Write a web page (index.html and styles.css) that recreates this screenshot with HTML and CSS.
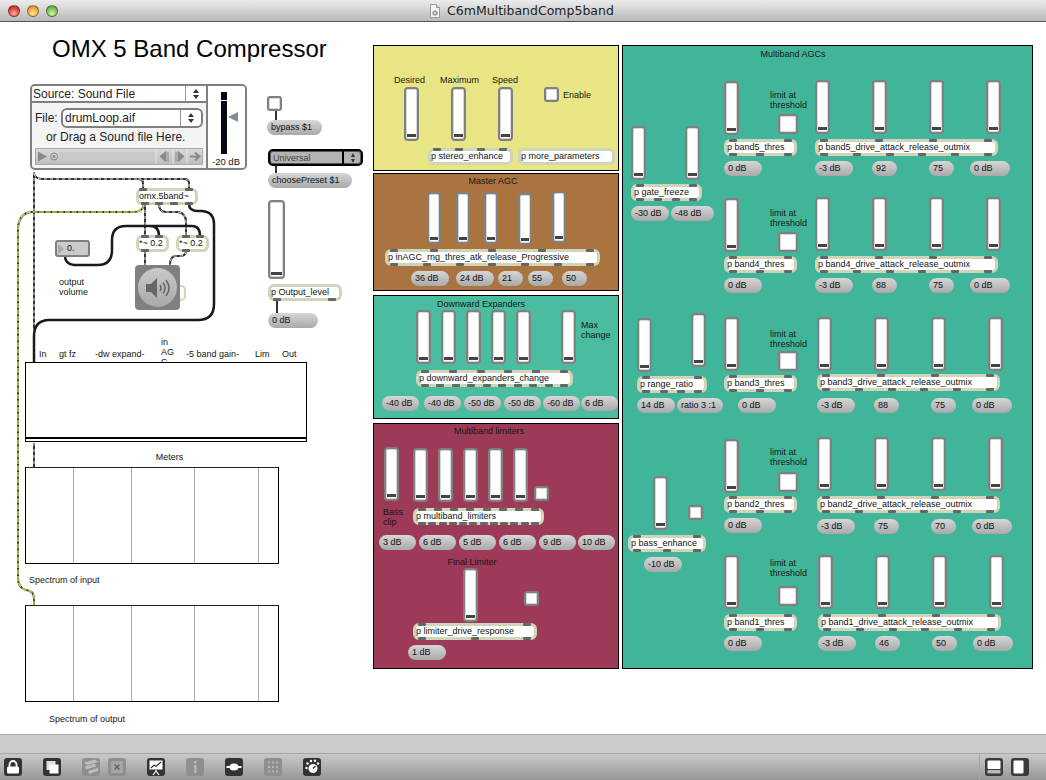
FILE: index.html
```html
<!DOCTYPE html>
<html>
<head>
	<title>C6mMultibandComp5band</title>
	<link rel="stylesheet" href="styles.css">
</head>
<body>
	<div class="window">
		<header class="titlebar">
			<div class="lights">
				<span class="light red"></span>
				<span class="light amber"></span>
				<span class="light green"></span>
			</div>
			<div class="doc-title">
				<svg class="doc-icon" width="12" height="14" viewBox="0 0 12 14">
					<path d="M1.5 .5h6l3 3v10h-9z" fill="#f4f4f4" stroke="#999"/>
					<path d="M7.5 .5v3h3" fill="#ddd" stroke="#999"/>
					<circle cx="6" cy="9" r="2.6" fill="#8a93a6"/>
					<path d="M6 6.400a2.600 2.600 0 0 1 2.600 2.600H6z" fill="#d98b3a"/>
					<circle cx="6" cy="9" r=".9" fill="#fff"/>
				</svg>
				C6mMultibandComp5band
			</div>
		</header>

		<main class="canvas" id="canvas">
			<svg class="wires" width="1046" height="712" viewBox="0 22 1046 712">
				<path class="wire-base" d="M34 172V330M34 443V467M34 174Q36 179 42 179H138Q143 179 143 183V188M138 179H184Q189 179 189 183V188"/>
				<path class="wire-dash" d="M34 172V330M34 443V467M34 174Q36 179 42 179H138Q143 179 143 183V188M138 179H184Q189 179 189 183V188"/>
				<path class="wire-base" d="M145 204V236M145 251V266M159 204Q159 212 166 212H178Q186 213 186 222V236M186 251Q186 256 180 256H175Q170 257 170 265"/>
				<path class="wire-dash" d="M145 204V236M145 251V266M159 204Q159 212 166 212H178Q186 213 186 222V236M186 251Q186 256 180 256H175Q170 257 170 265"/>
				<path class="wire-base" d="M144 204Q143 212 134 212H32Q18 213 18 230V578Q18 588 26 590Q34 591 34 598V606"/>
				<path class="wire-green" d="M144 204Q143 212 134 212H32Q18 213 18 230V578Q18 588 26 590Q34 591 34 598V606"/>
				<path class="wire-thick" d="M65 256Q65 264 74 265H98Q112 265 112 250V240Q112 226 126 226H150Q159 226 159 236M150 226H192Q200 226 200 236"/>
				<path class="wire-thick" d="M189 204Q189 211 198 211H202Q214 212 214 224V304Q214 320 198 320H48Q34 321 34 336V363"/>
				<path class="wire-thin" d="M276 111V121M276 165V174M277 300V314"/>
			</svg>

			<h1 class="page-title">OMX 5 Band Compressor</h1>

			<section class="player">
				<div class="player-main">
					<div class="source-row">
						<span class="source-label">Source: Sound File</span>
						<span class="stepper"><i class="up"></i><i class="down"></i></span>
					</div>
					<div class="file-row">
						<span class="file-label">File:</span>
						<div class="file-menu">
							<span class="file-name">drumLoop.aif</span>
							<span class="stepper"><i class="up"></i><i class="down"></i></span>
						</div>
					</div>
					<div class="drag-hint">or Drag a Sound file Here.</div>
					<div class="transport">
						<svg width="169" height="17" viewBox="0 0 169 17">
							<path d="M3 3.5l9 5-9 5z" fill="#8a8a8a"/>
							<circle cx="19" cy="8.5" r="3.5" fill="none" stroke="#8a8a8a"/>
							<circle cx="19" cy="8.5" r="1.5" fill="#8a8a8a"/>
							<rect x="24" y="4" width="96" height="9" rx="2" fill="#c8c8c8"/>
							<path d="M125 8.5l6-5v10zM133 3.5v10" fill="#8a8a8a" stroke="#8a8a8a"/>
							<path d="M141 3.5v10M143 3.5l6 5-6 5z" fill="#8a8a8a" stroke="#8a8a8a"/>
							<path d="M155 8.5h9M160 4.5l4.500 4-4.500 4" fill="none" stroke="#8a8a8a" stroke-width="2"/>
							<path d="M121 0v17M138 0v17M152 0v17" stroke="#e4e4e4"/>
						</svg>
					</div>
				</div>
				<div class="player-gain">
					<div class="gain-track">
						<span class="gain-bar"><i class="gain-tick"></i></span>
						<svg class="gain-pointer" width="10" height="10" viewBox="0 0 10 10"><path d="M0 5L10 0V10z"/></svg>
					</div>
					<div class="gain-label">-20 dB</div>
				</div>
			</section>

			<div class="ezdac">
				<div class="ezdac-face">
					<svg width="26" height="22" viewBox="0 0 26 22">
						<path d="M1 7h5l6-6v20l-6-6H1z" fill="#666"/>
						<path d="M15 8q2 3 0 6M18 5.500q4 5.500 0 11M21 3q6 8 0 16" fill="none" stroke="#666" stroke-width="1.600"/>
					</svg>
				</div>
			</div>
			<div class="ezdac-tail"></div>

			<div class="meter-box">
				<div class="meter-rule"></div>
			</div>
		</main>

		<div class="status-strip"></div>

		<footer class="toolbar">
			<div class="tools-left">
				<span class="tool">
					<svg width="18" height="18" viewBox="0 0 18 18"><path d="M5.500 9V6.500a3.500 3.500 0 0 1 7 0V9" fill="none" stroke="#fff" stroke-width="1.800"/><rect x="3" y="8.500" width="12" height="7" rx="1.500" fill="#fff"/></svg>
				</span>
				<span class="tool">
					<svg width="18" height="18" viewBox="0 0 18 18"><rect x="3.500" y="3" width="9" height="9" fill="#d8e4e0"/><rect x="6.500" y="6.500" width="9" height="9" fill="#fff"/></svg>
				</span>
				<span class="tool off gap-s">
					<svg width="18" height="18" viewBox="0 0 18 18"><path d="M2 4.500l11-3 3 2.500-11 3zM3 8.500l10-3 1 3-10 3zM6 13l10-3v3l-9 3z" fill="#bdbdbd"/></svg>
				</span>
				<span class="tool off">
					<svg width="18" height="18" viewBox="0 0 18 18"><rect x="3" y="3" width="12" height="12" fill="#a6a6a6"/><path d="M6.500 6.500l5 5M11.500 6.500l-5 5" stroke="#666" stroke-width="1.600"/></svg>
				</span>
				<span class="tool gap-l">
					<svg width="18" height="18" viewBox="0 0 18 18"><rect x="2.500" y="2.500" width="13" height="9" fill="#fff"/><path d="M4 10l3-3 2 1.500L14 4" fill="none" stroke="#333" stroke-width="1.200"/><path d="M9 12v2M9 13l-3 4M9 13l3 4" stroke="#fff" stroke-width="1.200"/></svg>
				</span>
				<span class="tool off gap-l">
					<svg width="18" height="18" viewBox="0 0 18 18"><rect x="8" y="3" width="2.500" height="2.500" fill="#b6b6b6"/><rect x="8" y="7" width="2.500" height="8" fill="#b6b6b6"/></svg>
				</span>
				<span class="tool gap-l">
					<svg width="18" height="18" viewBox="0 0 18 18"><path d="M1.500 9h15" stroke="#fff" stroke-width="2"/><ellipse cx="9" cy="9" rx="4.500" ry="3.500" fill="#fff"/></svg>
				</span>
				<span class="tool off gap-l">
					<svg width="18" height="18" viewBox="0 0 18 18"><path d="M4 4.500h10M4 9h10M4 13.500h10" stroke="#b4b4b4" stroke-width="2" stroke-dasharray="2 2"/></svg>
				</span>
				<span class="tool gap-l">
					<svg width="18" height="18" viewBox="0 0 18 18"><circle cx="10" cy="10.500" r="4.500" fill="#fff"/><path d="M10 10.500l2.500-2.500" stroke="#333" stroke-width="1.300"/><g fill="#fff"><circle cx="3.500" cy="10" r="1.200"/><circle cx="4.500" cy="5.500" r="1.200"/><circle cx="8" cy="3" r="1.200"/><circle cx="12" cy="2.800" r="1.200"/><circle cx="15" cy="5.500" r="1.200"/></g></svg>
				</span>
			</div>
			<div class="tools-right">
				<span class="tool pane">
					<svg width="18" height="18" viewBox="0 0 18 18"><rect x="2.500" y="2.500" width="13" height="8.500" rx="1" fill="#fff"/><rect x="2.500" y="12" width="13" height="3.500" fill="#b8b8b8"/></svg>
				</span>
				<span class="tool pane">
					<svg width="18" height="18" viewBox="0 0 18 18"><rect x="2.500" y="2.500" width="10" height="13" rx="1" fill="#fff"/></svg>
				</span>
			</div>
		</footer>
	</div>
	<script src="app.js"></script>
</body>
</html>
```

FILE: styles.css
```css
* {
	box-sizing: border-box;
}
html, body {
	margin: 0;
	padding: 0;
	height: 100%;
}
body {
	font-family: "Liberation Sans", Arial, sans-serif;
	font-size: 9px;
	color: #111;
	overflow: hidden;
}
.window {
	display: flex;
	flex-direction: column;
	width: 1046px;
	height: 780px;
}

/* title bar */
.titlebar {
	position: relative;
	display: flex;
	align-items: center;
	justify-content: center;
	height: 22px;
	flex-shrink: 0;
	background: linear-gradient(#ececec, #b9b9b9);
	border-bottom: 1px solid #555;
}
.lights {
	position: absolute;
	left: 8px;
	top: 5px;
	display: flex;
	gap: 7px;
}
.light {
	width: 12px;
	height: 12px;
	border-radius: 50%;
	border: 1px solid rgba(0,0,0,0.35);
}
.red {
	background: radial-gradient(circle at 50% 75%, #ffb0a8, #e0413a 60%, #a82a25);
}
.amber {
	background: radial-gradient(circle at 50% 75%, #ffe6a0, #eda63a 60%, #b37a20);
}
.green {
	background: radial-gradient(circle at 50% 75%, #d6f5b0, #75bd4f 60%, #4d8c30);
}
.doc-title {
	display: flex;
	align-items: center;
	gap: 6px;
	margin-left: -3px;
	font-family: "DejaVu Sans", sans-serif;
	font-size: 12.5px;
	color: #222;
}
.doc-icon {
	margin-top: 1px;
}

/* patcher canvas, everything in it sits on free coordinates */
.canvas {
	position: relative;
	flex: 1;
	background-color: #fff;
	overflow: hidden;
}
.wires {
	position: absolute;
	left: 0;
	top: 0;
	z-index: 2;
}
.wires path {
	fill: none;
}
.wire-base {
	stroke: #333;
	stroke-width: 2;
}
.wire-dash {
	stroke: #e0e0e0;
	stroke-width: 1;
	stroke-dasharray: 3 3;
}
.wire-green {
	stroke: #b6d94c;
	stroke-width: 1.500;
	stroke-dasharray: 5 1.500;
}
.wire-thick {
	stroke: #1a1a1a;
	stroke-width: 2.500;
}
.wire-thin {
	stroke: #333;
	stroke-width: 2;
}
.page-title {
	position: absolute;
	left: 52px;
	top: 13px;
	margin: 0;
	font-size: 24px;
	font-weight: normal;
	line-height: 28px;
	color: #000;
	white-space: nowrap;
}

/* sound file player */
.player {
	position: absolute;
	left: 30px;
	top: 62px;
	z-index: 3;
	display: flex;
	width: 217px;
	height: 86px;
	background-color: #f4f4f4;
	border: 2px solid #808080;
	border-radius: 5px;
	overflow: hidden;
}
.player-main {
	width: 176px;
	border-right: 2px solid #808080;
}
.source-row {
	display: flex;
	align-items: center;
	justify-content: space-between;
	height: 17px;
	background-color: #fff;
	border-bottom: 2px solid #808080;
}
.source-label {
	padding-left: 1px;
	font-size: 12px;
	color: #222;
}
.stepper {
	display: flex;
	flex-direction: column;
	align-items: center;
	justify-content: center;
	gap: 2px;
	width: 21px;
	height: 100%;
	border-left: 1px solid #999;
}
.stepper i {
	width: 0;
	height: 0;
	border-left: 3px solid transparent;
	border-right: 3px solid transparent;
}
.stepper .up {
	border-bottom: 4px solid #333;
}
.stepper .down {
	border-top: 4px solid #333;
}
.file-row {
	display: flex;
	align-items: center;
	padding: 5px 0 0 3px;
}
.file-label {
	width: 26px;
	font-size: 12px;
	color: #222;
}
.file-menu {
	display: flex;
	align-items: center;
	justify-content: space-between;
	width: 142px;
	height: 20px;
	background-color: #fff;
	border: 2px solid #808080;
	border-radius: 6px;
}
.file-name {
	padding-left: 2px;
	font-size: 12px;
	color: #222;
}
.drag-hint {
	padding: 2px 0 0 14px;
	font-size: 12px;
	line-height: 15px;
	color: #222;
}
.transport {
	display: flex;
	height: 17px;
	margin: 3px 0 0 3px;
	width: 168px;
	background: linear-gradient(#d8d8d8, #bdbdbd);
	border: 1px solid #aaa;
	overflow: hidden;
}
.transport svg {
	flex-shrink: 0;
	margin: -1px;
}
.player-gain {
	flex: 1;
	background-color: #fff;
}
.gain-track {
	position: relative;
	height: 62px;
	margin-top: 6px;
}
.gain-bar {
	position: absolute;
	left: 13px;
	top: 0;
	width: 6px;
	height: 62px;
	background-color: #040814;
}
.gain-tick {
	display: block;
	width: 6px;
	height: 1px;
	margin-top: 8px;
	background-color: #fff;
}
.gain-pointer {
	position: absolute;
	left: 20px;
	top: 20px;
}
.gain-pointer path {
	fill: #7f8c99;
}
.gain-label {
	margin-top: 1px;
	padding-left: 4px;
	font-size: 9.500px;
	line-height: 14px;
	color: #111;
	white-space: nowrap;
}

/* dac */
.ezdac {
	position: absolute;
	left: 135px;
	top: 243px;
	z-index: 4;
	display: flex;
	align-items: center;
	justify-content: center;
	width: 45px;
	height: 45px;
	background-color: #808080;
	border-radius: 4px;
}
.ezdac-face {
	display: flex;
	align-items: center;
	justify-content: center;
	width: 39px;
	height: 39px;
	background: linear-gradient(#c9c9cc, #a9a9ad);
	border-radius: 50%;
}
.ezdac-tail {
	position: absolute;
	left: 176px;
	top: 263px;
	z-index: 3;
	width: 10px;
	height: 16px;
	background-color: #fff;
	border: 2px solid #d0d6b4;
	border-radius: 5px;
}

/* meter boxes */
.meter-box {
	position: absolute;
	left: 25px;
	top: 340px;
	z-index: 3;
	width: 282px;
	height: 80px;
	background-color: #fff;
	border: 1px solid #000;
}
.meter-rule {
	position: absolute;
	left: 0;
	right: 0;
	bottom: 2px;
	height: 2px;
	background-color: #000;
}
.scope {
	position: absolute;
	z-index: 3;
	width: 254px;
	height: 97px;
	background-color: #fff;
	border: 1px solid #000;
	border-top-color: #222;
}
.scope-line {
	position: absolute;
	top: 0;
	bottom: 0;
	width: 1px;
	background-color: #aaa;
}

/* coloured panels */
.panel {
	position: absolute;
	border: 1px solid #000;
}
.panel-yellow {
	background-color: #e8e584;
}
.panel-brown {
	background-color: #a9743f;
}
.panel-green {
	background-color: #4abda0;
}
.panel-crimson {
	background-color: #9c3a57;
}
.panel-teal {
	background-color: #41b59a;
}

/* patcher objects */
.node {
	position: absolute;
	z-index: 3;
}
.node.under {
	z-index: 1;
}
.label {
	line-height: 10px;
	white-space: pre;
	color: #161616;
}
.slider {
	background-color: #fff;
	border: 2px solid #808080;
	border-radius: 4px;
	box-shadow: inset 0 0 0 1px #d8d8d8;
}
.slider::after {
	content: "";
	position: absolute;
	left: 1px;
	right: 1px;
	bottom: 2px;
	height: 3px;
	background-color: #444;
}
.toggle {
	background-color: #fff;
	border: 2px solid #808080;
	border-radius: 3px;
	box-shadow: inset 0 0 0 1px #d8d8d8;
}
.box {
	display: flex;
	align-items: center;
	padding-left: 1px;
	background-color: #fff;
	border: 3px solid #d0d4b8;
	border-radius: 6px;
	line-height: 11px;
	white-space: nowrap;
	color: #111;
}
.box-text {
	margin-left: -1px;
}
.tab {
	position: absolute;
	width: 8px;
	height: 3px;
	background-color: #666;
	border-radius: 1px;
}
.tab-top {
	top: -3px;
}
.tab-bottom {
	bottom: -3px;
}
.num {
	display: flex;
	align-items: center;
	padding-left: 4px;
	background: linear-gradient(#d6d6d6, #a9a9a9);
	border-radius: 8px;
	line-height: 11px;
	white-space: nowrap;
	color: #111;
}
.num-square {
	padding-left: 10px;
	background: #cbcbcb;
	border: 2px solid #808080;
	border-radius: 3px;
}
.num-square::before {
	content: "";
	position: absolute;
	left: 1px;
	top: 2px;
	border-left: 6px solid #aaa;
	border-top: 5px solid transparent;
	border-bottom: 5px solid transparent;
}
.menu-dark {
	display: flex;
	align-items: center;
	justify-content: space-between;
	padding-left: 3px;
	background-color: #b3b3b3;
	border: 2px solid #000;
	border-radius: 5px;
	box-shadow: inset 0 0 0 1px #555;
	color: #444;
}
.menu-dark .stepper {
	width: 19px;
	border-left: 2px solid #000;
}
.menu-dark .stepper i {
	border-left-width: 2.500px;
	border-right-width: 2.500px;
}

/* bottom of the window */
.status-strip {
	height: 20px;
	flex-shrink: 0;
	background-color: #cbcbcb;
	border-top: 1px solid #a8a8a8;
	border-bottom: 1px solid #a8a8a8;
}
.toolbar {
	display: flex;
	align-items: flex-start;
	justify-content: space-between;
	height: 26px;
	padding: 4px 17px 0 4px;
	flex-shrink: 0;
	background: linear-gradient(#c9c9c9, #969696);
}
.tools-left {
	display: flex;
	gap: 21px;
}
.tools-right {
	display: flex;
	gap: 8px;
	padding-left: 5px;
	border-left: 1px solid #a4a4a4;
	margin-top: -4px;
	padding-top: 4px;
	height: 26px;
}
.tool {
	display: block;
	width: 18px;
	height: 18px;
	background-color: #333;
	border-radius: 3px;
}
.tool svg {
	display: block;
}
.tool.off {
	background-color: #8f8f8f;
}
.tools-left .gap-s + .tool {
	margin-left: -13px;
}
.pane {
	background-color: #3a3a3a;
}
```

FILE: app.js
```js
// patcher contents, all coordinates are window coordinates from the patch
var CANVAS_TOP = 22;
var canvas = document.getElementById("canvas");

function place(kind, x, y, w, h, text) {
	var el = document.createElement("div");
	el.className = "node " + kind;
	el.style.left = x + "px";
	el.style.top = (y - CANVAS_TOP) + "px";
	if (w) el.style.width = w + "px";
	if (h) el.style.height = h + "px";
	if (text) el.textContent = text;
	canvas.appendChild(el);
	return el;
}

function panel(color, x, y, w, h) {
	var el = document.createElement("div");
	el.className = "panel panel-" + color;
	el.style.left = x + "px";
	el.style.top = (y - CANVAS_TOP) + "px";
	el.style.width = w + "px";
	el.style.height = h + "px";
	canvas.appendChild(el);
}

function label(text, x, y) {
	place("label", x, y, 0, 0, text);
}

function centered(text, cx, y) {
	var el = place("label", cx, y, 0, 0, text);
	el.style.transform = "translateX(-50%)";
}

function slider(x, y, w, h) {
	place("slider", x, y, w || 15, h || 54);
}

function toggle(x, y, size) {
	place("toggle", x, y, size || 15, size || 15);
}

function num(text, x, y, w) {
	place("num", x, y, w, 15, text);
}

// tops and bottoms are tab centres in window coordinates
function box(text, x, y, w, tops, bottoms, h) {
	var el = place("box", x, y, w, h || 17);
	var span = document.createElement("span");
	span.className = "box-text";
	span.textContent = text;
	el.appendChild(span);
	addTabs(el, x, tops || [], "tab-top");
	addTabs(el, x, bottoms || [], "tab-bottom");
}

function addTabs(el, x, list, side) {
	list.forEach(function(cx) {
		var tab = document.createElement("span");
		tab.className = "tab " + side;
		tab.style.left = (cx - x - 7) + "px";
		el.appendChild(tab);
	});
}

function spread(a, b, n) {
	var out = [];
	for (var i = 0; i < n; i++) out.push(Math.round(a + (b - a) * i / (n - 1)));
	return out;
}

// left column
toggle(267, 96);
num("bypass $1", 267, 120, 55);
var menu = place("menu-dark", 268, 149, 95, 17);
menu.innerHTML = '<span>Universal</span><span class="stepper"><i class="up"></i><i class="down"></i></span>';
num("choosePreset $1", 268, 173, 84);
slider(268, 200, 17, 79);
box("p Output_level", 268, 284, 74, [], [277, 332]);
num("0 dB", 268, 313, 50);

box("omx.5band~", 136, 188, 62, [143, 189], [145, 159, 174, 189]);
box("*~ 0.2", 136, 235, 33, [145, 159], [145]);
box("*~ 0.2", 176, 235, 33, [186, 200], [186]);
place("num num-square", 55, 240, 35, 17, "0.");
label("output\nvolume", 59, 277);

label("In", 39, 349);
label("gt fz", 59, 349);
label("-dw expand-", 95, 349);
place("label under", 161, 337, 0, 0, "in\nAG\nC");
label("-5 band gain-", 186, 349);
label("Lim", 255, 349);
label("Out", 282, 349);

centered("Meters", 169.5, 452);
[467, 605].forEach(function(top) {
	var el = place("scope", 25, top, 254, 97);
	[47, 105, 168, 232].forEach(function(x) {
		var line = document.createElement("div");
		line.className = "scope-line";
		line.style.left = x + "px";
		el.appendChild(line);
	});
});
label("Spectrum of input", 29, 575);
label("Spectrum of output", 49, 714);

// panels
panel("yellow", 373, 45, 246, 126);
panel("brown", 373, 173, 246, 118);
panel("green", 373, 295, 246, 124);
panel("crimson", 373, 423, 246, 246);
panel("teal", 622, 45, 411, 624);

// stereo enhance
label("Desired", 394, 75);
label("Maximum", 440, 75);
label("Speed", 492, 75);
[404, 451, 498].forEach(function(x) { slider(x, 87); });
toggle(544, 87);
label("Enable", 563, 90);
box("p stereo_enhance", 428, 148, 85, [437, 459, 481, 503], []);
box("p more_parameters", 518, 148, 97);

// master agc
centered("Master AGC", 493, 176);
slider(427, 192, 14, 52);
slider(456, 192, 14, 52);
slider(484, 192, 14, 52);
slider(518, 193, 14, 52);
slider(552, 191, 14, 52);
box("p inAGC_rng_thres_atk_release_Progressive", 385, 249, 215, [394, 434, 492, 542, 590], [394, 427, 460, 492, 525, 558, 590]);
num("36 dB", 411, 271, 38);
num("24 dB", 456, 271, 38);
num("21", 498, 271, 25);
num("55", 528, 271, 25);
num("50", 562, 271, 25);

// downward expanders
centered("Downward Expanders", 481, 299);
[416, 441, 466, 491, 516, 561].forEach(function(x) { slider(x, 310); });
label("Max\nchange", 581, 320);
box("p downward_expanders_change", 416, 370, 157, spread(425, 564, 6), spread(425, 564, 10));
num("-40 dB", 382, 396, 37);
num("-40 dB", 424, 396, 37);
num("-50 dB", 464, 396, 37);
num("-50 dB", 504, 396, 37);
num("-60 dB", 543, 396, 37);
num("6 dB", 581, 396, 37);

// limiters
centered("Multiband limiters", 489, 426);
slider(384, 447);
[413, 438, 463, 488, 513].forEach(function(x) { slider(x, 448); });
toggle(534, 486);
label("Bass\nclip", 383, 507);
box("p multiband_limiters", 413, 508, 131, spread(422, 535, 8), spread(422, 535, 12));
num("3 dB", 379, 535, 37);
num("6 dB", 419, 535, 37);
num("5 dB", 459, 535, 37);
num("6 dB", 499, 535, 37);
num("9 dB", 539, 535, 37);
num("10 dB", 578, 535, 37);
centered("Final Limiter", 472, 557);
slider(463, 568);
toggle(524, 591);
box("p limiter_drive_response", 413, 623, 124, [422, 527], [422, 475, 527]);
num("1 dB", 408, 645, 38);

// multiband agcs
centered("Multiband AGCs", 793, 49);

// x is the drive column, y values: thres slider, sliders, toggle, patchers, thres number, numbers
var bands = [
	{ n: 5, x: 815, sy: 81, dy: 80, ly: 90, ty: 114, py: 139, py2: 139, ny: 161, ny2: 161, tx: 724, vals: ["-3 dB", "92", "75", "0 dB"] },
	{ n: 4, x: 815, sy: 198, dy: 197, ly: 208, ty: 232, py: 256, py2: 256, ny: 278, ny2: 278, tx: 724, vals: ["-3 dB", "88", "75", "0 dB"] },
	{ n: 3, x: 817, sy: 317, dy: 317, ly: 329, ty: 351, py: 375, py2: 374, ny: 398, ny2: 398, tx: 738, vals: ["-3 dB", "88", "75", "0 dB"] },
	{ n: 2, x: 817, sy: 439, dy: 437, ly: 447, ty: 472, py: 496, py2: 496, ny: 518, ny2: 519, tx: 724, vals: ["-3 dB", "75", "70", "0 dB"] },
	{ n: 1, x: 818, sy: 555, dy: 555, ly: 558, ty: 586, py: 614, py2: 614, ny: 636, ny2: 636, tx: 724, vals: ["-3 dB", "46", "50", "0 dB"] }
];

bands.forEach(function(b) {
	slider(724, b.sy);
	label("limit at\nthreshold", 770, b.ly);
	toggle(778, b.ty, 20);
	for (var i = 0; i < 4; i++) slider(b.x + i * 57, b.dy);
	box("p band" + b.n + "_thres", 724, b.py, 73, [733, 788], [733, 760, 788]);
	var tabsTop = [b.x + 9, b.x + 64, b.x + 118, b.x + 173];
	var tabsBottom = spread(b.x + 9, b.x + 173, 6);
	box("p band" + b.n + "_drive_attack_release_outmix", b.x, b.py2, 183, tabsTop, tabsBottom);
	num("0 dB", b.tx, b.ny, 38);
	num(b.vals[0], b.x, b.ny2, 38);
	num(b.vals[1], b.x + 57, b.ny2, 25);
	num(b.vals[2], b.x + 114, b.ny2, 25);
	num(b.vals[3], b.x + 155, b.ny2, 40);
});

slider(631, 126);
slider(685, 126);
box("p gate_freeze", 631, 184, 71, [640, 693], [640, 658, 676, 693]);
num("-30 dB", 631, 206, 38);
num("-48 dB", 671, 206, 43);

slider(637, 318);
slider(691, 313);
box("p range_ratio", 637, 376, 70, [646, 698], [646, 664, 681, 698]);
num("14 dB", 637, 398, 38);
num("ratio 3 :1", 677, 398, 46);

slider(653, 476);
toggle(688, 505);
box("p bass_enhance", 628, 535, 78, [637, 697], [637, 667, 697]);
num("-10 dB", 644, 557, 38);
```
